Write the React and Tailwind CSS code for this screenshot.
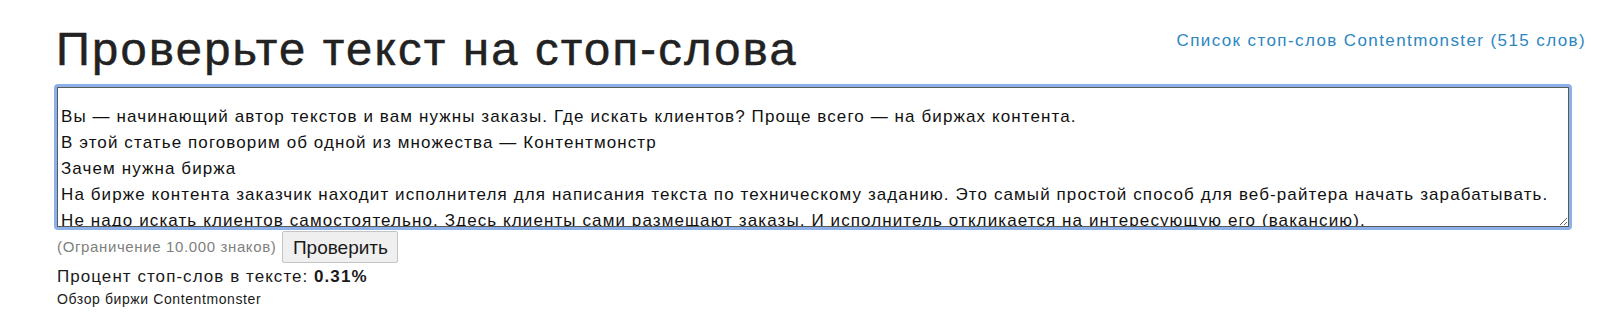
const lines = [
  'Вы — начинающий автор текстов и вам нужны заказы. Где искать клиентов? Проще всего — на биржах контента.',
  'В этой статье поговорим об одной из множества — Контентмонстр',
  'Зачем нужна биржа',
  'На бирже контента заказчик находит исполнителя для написания текста по техническому заданию. Это самый простой способ для веб-райтера начать зарабатывать.',
  'Не надо искать клиентов самостоятельно. Здесь клиенты сами размещают заказы. И исполнитель откликается на интересующую его (вакансию).',
  'Удобство биржи в том, что все расчеты проходят через систему.',
];

export default function App() {
  return (
    <div className="bg-white w-[1600px] h-[331px] font-['Liberation_Sans',Arial,sans-serif] text-[#222] pl-[54px] pr-[14px] pt-[23px]">
      <div className="flex justify-between items-start">
        <h1 className="text-[47px] leading-[52px] tracking-[2.3px] text-[#222] pl-[2px] [-webkit-text-stroke:0.5px_#222]">
          Проверьте текст на стоп-слова
        </h1>
        <a href="#" className="text-[17px] leading-[20px] tracking-[1.4px] text-[#2d86c1] mt-[8px]">
          Список стоп-слов Contentmonster (515 слов)
        </a>
      </div>
      <div className="mt-[9px] w-[1518px] h-[146px] rounded-[4px] border-[3px] border-[#8cb0e8]">
        <textarea
          readOnly
          wrap="off"
          defaultValue={lines.join('\n')}
          className="block w-full h-full border border-[#5a5a5a] bg-white text-[17px] leading-[26px] tracking-[1.1px] text-[#111] pt-[16px] pl-[3px] pr-[2px] resize-y overflow-hidden outline-none"
        />
      </div>
      <div className="flex items-start gap-[6px] pl-[3px]">
        <span className="text-[15px] leading-[18px] tracking-[0.63px] text-[#808080] mt-[8px]">
          (Ограничение 10.000 знаков)
        </span>
        <button className="mt-[1px] h-[32px] w-[116px] bg-[#efefef] border border-[#c4c4c4] rounded-[2px] text-[19px] text-[#1a1a1a] leading-none">
          Проверить
        </button>
      </div>
      <div className="pl-[3px] mt-[3px] text-[17px] tracking-[1.05px] text-[#1a1a1a] leading-[22px]">
        Процент стоп-слов в тексте: <b>0.31%</b>
      </div>
      <div className="pl-[3px] mt-[2px] text-[14px] tracking-[0.6px] text-[#1a1a1a] leading-[18px]">
        Обзор биржи Contentmonster
      </div>
    </div>
  );
}
